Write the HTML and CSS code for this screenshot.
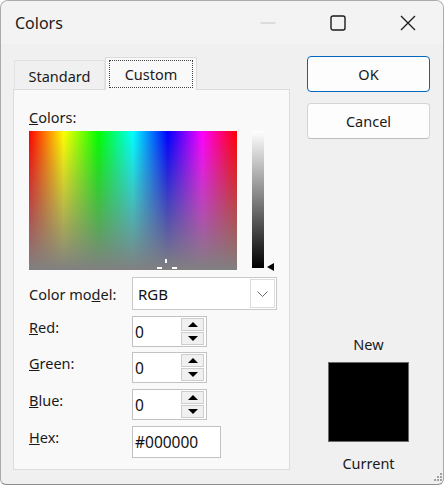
FILE: index.html
```html
<!DOCTYPE html>
<html>
<head>
<meta charset="utf-8">
<link rel="stylesheet" href="styles.css">
</head>
<body>
<div class="window">
  <div class="titlebar">
    <div class="title">Colors</div>
    <div class="caption">
      <div class="cbtn"><svg width="16" height="16" viewBox="0 0 16 16"><line x1="0.5" y1="8" x2="15.5" y2="8" stroke="#c4c4c4" stroke-width="1"/></svg></div>
      <div class="cbtn"><svg width="16" height="16" viewBox="0 0 16 16"><rect x="1" y="1" width="14" height="14" rx="2" fill="none" stroke="#1a1a1a" stroke-width="1.4"/></svg></div>
      <div class="cbtn"><svg width="16" height="16" viewBox="0 0 16 16"><path d="M1 1 L15 15 M15 1 L1 15" stroke="#1a1a1a" stroke-width="1.3" fill="none"/></svg></div>
    </div>
  </div>
  <div class="content">
    <div class="leftcol">
      <div class="tabs">
        <div class="tab">Standard</div>
        <div class="tab active"><span class="focus">Custom</span></div>
      </div>
      <div class="panel">
        <div class="colors-label"><u>C</u>olors:</div>
        <div class="pickrow">
          <div class="spectrum">
            <div class="cross">
              <span class="cv"></span><span class="ch left"></span><span class="ch right"></span>
            </div>
          </div>
          <div class="lum"></div>
          <div class="arrow"></div>
        </div>
        <div class="form">
          <div class="lbl center">Color mo<u>d</u>el:</div>
          <div class="select"><span class="val">RGB</span><span class="dd"><svg width="11" height="6" viewBox="0 0 11 6"><path d="M0.5 0.5 L5.5 5.5 L10.5 0.5" fill="none" stroke="#6a6a6a" stroke-width="1"/></svg></span></div>

          <div class="lbl"><u>R</u>ed:</div>
          <div class="spin"><span class="val">0</span><span class="btns"><span class="up"><i></i></span><span class="down"><i></i></span></span></div>

          <div class="lbl"><u>G</u>reen:</div>
          <div class="spin"><span class="val">0</span><span class="btns"><span class="up"><i></i></span><span class="down"><i></i></span></span></div>

          <div class="lbl"><u>B</u>lue:</div>
          <div class="spin"><span class="val">0</span><span class="btns"><span class="up"><i></i></span><span class="down"><i></i></span></span></div>

          <div class="lbl"><u>H</u>ex:</div>
          <div class="hex"><span class="val">#000000</span></div>
        </div>
      </div>
    </div>
    <div class="rightcol">
      <div class="btn ok">OK</div>
      <div class="btn cancel">Cancel</div>
      <div class="preview">
        <div class="plabel">New</div>
        <div class="swatch"></div>
        <div class="plabel current">Current</div>
      </div>
    </div>
  </div>
  <div class="grip"><svg width="12" height="12" viewBox="0 0 12 12"><g fill="#a0a0a0"><rect x="10" y="2" width="2" height="2"/><rect x="7" y="5" width="2" height="2"/><rect x="10" y="5" width="2" height="2"/><rect x="4" y="8" width="2" height="2"/><rect x="7" y="8" width="2" height="2"/><rect x="10" y="8" width="2" height="2"/></g></svg></div>
</div>
</body>
</html>
```

FILE: styles.css
```css
* { box-sizing: border-box; }
html, body { margin: 0; padding: 0; background: #ffffff; }
body { font-family: "Noto Sans", "Open Sans", sans-serif; font-size: 14px; color: #1a1a1a; }

.window {
  position: relative;
  width: 444px;
  height: 485px;
  border: 1px solid #aaaaaa;
  border-bottom-color: #8c8c8c;
  border-radius: 8px 8px 6px 6px;
  background: #f0f0f0;
  overflow: hidden;
}

.titlebar {
  height: 43px;
  background: #f3f3f3;
  display: flex;
  align-items: center;
  justify-content: space-between;
}
.title { padding-left: 14px; font-size: 16px; color: #1a1a1a; }
.caption { display: flex; height: 43px; }
.cbtn { width: 70px; height: 43px; display: flex; align-items: center; justify-content: center; }
.cbtn svg { display: block; margin-top: 1px; }

.content {
  display: flex;
  padding: 12px 0 0 12px;
}
.leftcol { width: 277px; padding-top: 1px; }

.tabs { display: flex; height: 33px; margin-bottom: -1px; position: relative; z-index: 1; padding-left: 1px; }
.tab {
  margin-top: 3px;
  width: 91px;
  height: 29px;
  border: 1px solid #e2e2e2;
  border-bottom: none;
  display: flex;
  align-items: center;
  justify-content: center;
  font-size: 14.5px;
  padding-top: 1px;
}
.tab.active {
  margin-top: 0;
  width: 92px;
  height: 33px;
  background: #f9f9f9;
  border-color: #dcdcdc;
  padding: 2px 3px 2px 3px;
}
.focus {
  display: flex; align-items: center; justify-content: center;
  width: 100%; height: 100%;
  border: 1px dotted #444;
  padding-bottom: 1px;
}

.panel {
  width: 277px;
  height: 381px;
  background: #f9f9f9;
  border: 1px solid #dcdcdc;
  padding: 0 0 0 15px;
}
.colors-label { padding-top: 17px; line-height: 20px; height: 37px; font-size: 14.5px; }

.pickrow { display: flex; align-items: flex-start; margin-top: 4px; height: 139px; }
.spectrum {
  position: relative;
  width: 208px;
  height: 139px;
  background:
    linear-gradient(to bottom, rgba(128,128,128,0), rgb(128,128,128)),
    linear-gradient(to right, #ff0000 0%, #ffff00 16.67%, #00ff00 33.33%, #00ffff 50%, #0000ff 66.67%, #ff00ff 83.33%, #ff0000 100%);
}
.cross { position: absolute; left: 128px; top: 127px; width: 20px; height: 12px; }
.cross span { position: absolute; background: #ffffff; }
.cv { left: 8px; top: 1px; width: 2px; height: 4px; }
.ch { top: 9px; width: 5px; height: 2px; }
.ch.left { left: 0; }
.ch.right { left: 15px; }

.lum { width: 12px; height: 137px; margin-left: 15px; background: linear-gradient(to bottom, #ffffff, #000000); }
.arrow {
  align-self: flex-end;
  margin-left: 3px;
  margin-bottom: -1px;
  width: 0; height: 0;
  border-top: 4px solid transparent;
  border-bottom: 4px solid transparent;
  border-right: 7px solid #000;
}

.form {
  margin-top: 7px;
  display: grid;
  grid-template-columns: 103px auto;
  grid-template-rows: 34px 31px 32px 32px 32px;
  row-gap: 5px;
  align-items: start;
}
.lbl { line-height: 20px; padding-top: 1px; font-size: 14.5px; }
.lbl.center { padding-top: 7px; }

.select {
  width: 145px; height: 33px;
  background: #ffffff;
  border: 1px solid #c9c9c9;
  display: flex;
  align-items: center;
  justify-content: space-between;
  padding: 1px;
}
.val { padding-left: 2px; font-size: 15.5px; color: #111; }
.select .val { padding-left: 4px; font-size: 15px; }
.dd {
  width: 25px; height: 29px;
  border: 1px solid #dcdcdc;
  display: flex; align-items: center; justify-content: center;
}

.spin {
  width: 75px; height: 31px;
  background: #ffffff;
  border: 1px solid #c2c2c2;
  display: flex;
  align-items: center;
  justify-content: space-between;
  padding-right: 2px;
}
.btns { display: flex; flex-direction: column; width: 23px; gap: 1px; }
.btns span {
  height: 13px;
  background: #f0f0f0;
  border: 1px solid #cdcdcd;
  display: flex; align-items: center; justify-content: center;
}
.btns i { width: 0; height: 0; border-left: 5px solid transparent; border-right: 5px solid transparent; }
.up i { border-bottom: 5px solid #000; }
.down i { border-top: 5px solid #000; }

.hex {
  width: 89px; height: 32px;
  background: #ffffff;
  border: 1px solid #c2c2c2;
  display: flex; align-items: center;
}

.rightcol {
  width: 123px;
  margin-left: 17px;
  display: flex;
  flex-direction: column;
  align-items: center;
}
.btn {
  width: 123px; height: 36px;
  border-radius: 4px;
  background: #fdfdfd;
  display: flex; align-items: center; justify-content: center;
  font-size: 14.5px;
}
.ok { border: 1px solid #0067c0; }
.cancel { margin-top: 11px; border: 1px solid #d4d4d4; border-bottom-color: #bdbdbd; }

.preview { margin-top: auto; margin-bottom: -3px; display: flex; flex-direction: column; align-items: center; }
.plabel { line-height: 20px; font-size: 14.5px; }
.swatch { width: 81px; height: 80px; margin-top: 8px; background: #000; border: 1px solid #6a6a6a; }
.current { margin-top: 11px; }

.grip { position: absolute; right: 1px; bottom: 1px; width: 12px; height: 12px; }
.grip svg { display: block; }
```
